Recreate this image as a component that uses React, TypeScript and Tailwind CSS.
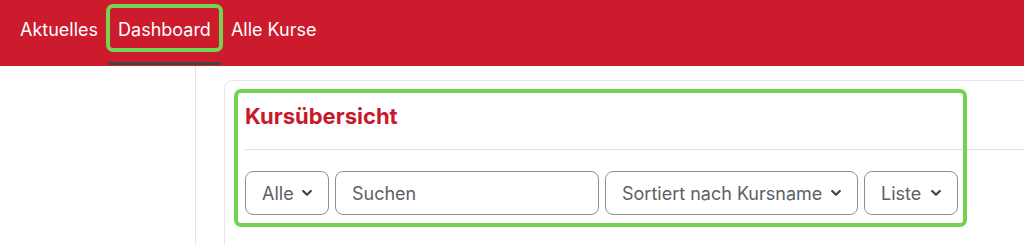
const navItems = ['Aktuelles', 'Dashboard', 'Alle Kurse'];

function Chevron() {
  return (
    <svg width="10" height="6" viewBox="0 0 10 6" className="shrink-0 text-[#3f454b]">
      <polyline points="1.2,1 5,4.8 8.8,1" fill="none" stroke="currentColor" strokeWidth="2.2" strokeLinecap="round" strokeLinejoin="round" />
    </svg>
  );
}

function SelectButton({ label, className }: { label: string; className: string }) {
  return (
    <button
      className={`flex h-[44px] items-center justify-between rounded-[8px] border border-[#8b9098] bg-white pl-[16px] pr-[16px] text-[18px] text-[#5b6167] ${className}`}
    >
      <span>{label}</span>
      <Chevron />
    </button>
  );
}

export default function App() {
  return (
    <div className="relative h-[244px] w-[1024px] overflow-hidden bg-white font-['Inter','Liberation_Sans',sans-serif]">
      {/* Top navigation */}
      <header className="flex h-[66px] items-stretch bg-[#cb1b2d] pl-[10px]">
        {navItems.map((item) => (
          <div key={item} className="relative flex items-center px-[10px] pb-[8px] text-[18px] text-white">
            {item}
            {item === 'Dashboard' && (
              <span className="absolute bottom-[1px] left-0 right-0 h-[3px] bg-[#4a3f44]" />
            )}
          </div>
        ))}
      </header>

      <div className="flex h-[178px]">
        {/* Sidebar */}
        <aside className="w-[196px] shrink-0 border-r border-[#e3e5e8]" />

        {/* Main content */}
        <main className="min-w-0 flex-1 pl-[28px] pt-[14px]">
          <section className="h-[220px] w-[900px] rounded-tl-[8px] border border-[#e3e5e8] px-[20px] pt-[20px]">
            <h2 className="text-[22px] font-bold leading-[30px] text-[#c8192c]">Kursübersicht</h2>
            <hr className="mt-[18px] border-[#dfe1e4]" />
            <div className="mt-[21px] flex gap-[6px]">
              <SelectButton label="Alle" className="w-[84px]" />
              <input
                placeholder="Suchen"
                className="h-[44px] w-[264px] rounded-[8px] border border-[#8b9098] px-[16px] text-[18px] text-[#5b6167] placeholder:text-[#5b6167]"
              />
              <SelectButton label="Sortiert nach Kursname" className="w-[253px]" />
              <SelectButton label="Liste" className="w-[94px]" />
            </div>
          </section>
        </main>
      </div>

      {/* Highlight annotations */}
      <div className="pointer-events-none absolute left-[106px] top-[4px] h-[48px] w-[117px] rounded-[7px] border-[4px] border-[#72d552]" />
      <div className="pointer-events-none absolute left-[234px] top-[89px] h-[138px] w-[733px] rounded-[7px] border-[4px] border-[#72d552]" />
    </div>
  );
}
